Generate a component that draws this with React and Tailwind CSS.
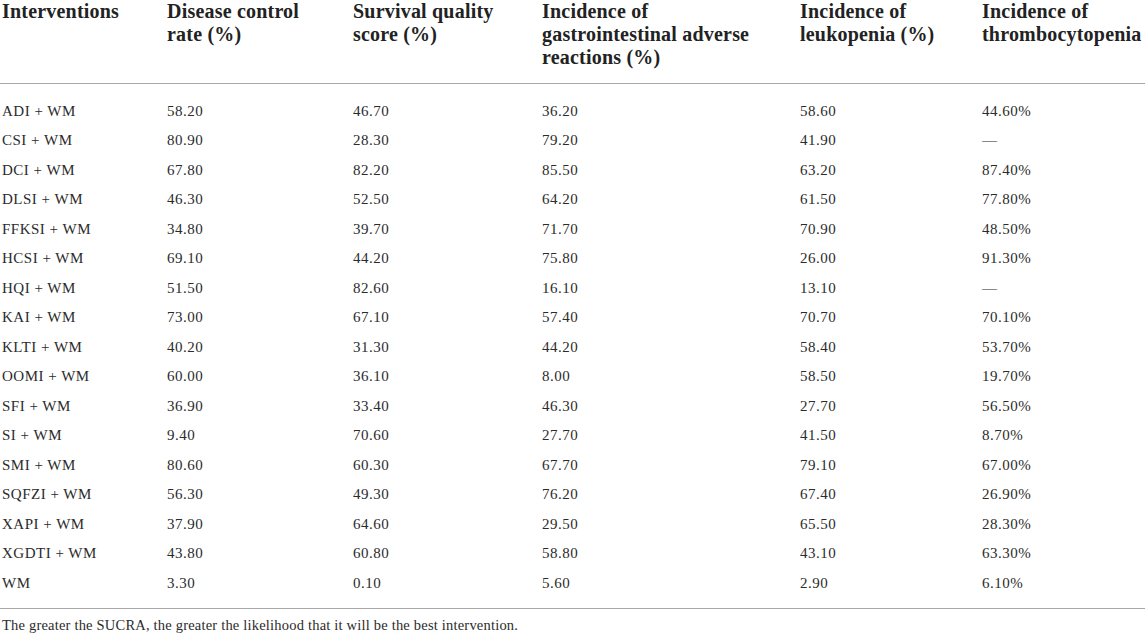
export default function App() {
  const headers = [
    ["Interventions"],
    ["Disease control", "rate (%)"],
    ["Survival quality", "score (%)"],
    ["Incidence of", "gastrointestinal adverse", "reactions (%)"],
    ["Incidence of", "leukopenia (%)"],
    ["Incidence of", "thrombocytopenia"],
  ];
  const rows = [
    ["ADI + WM", "58.20", "46.70", "36.20", "58.60", "44.60%"],
    ["CSI + WM", "80.90", "28.30", "79.20", "41.90", "—"],
    ["DCI + WM", "67.80", "82.20", "85.50", "63.20", "87.40%"],
    ["DLSI + WM", "46.30", "52.50", "64.20", "61.50", "77.80%"],
    ["FFKSI + WM", "34.80", "39.70", "71.70", "70.90", "48.50%"],
    ["HCSI + WM", "69.10", "44.20", "75.80", "26.00", "91.30%"],
    ["HQI + WM", "51.50", "82.60", "16.10", "13.10", "—"],
    ["KAI + WM", "73.00", "67.10", "57.40", "70.70", "70.10%"],
    ["KLTI + WM", "40.20", "31.30", "44.20", "58.40", "53.70%"],
    ["OOMI + WM", "60.00", "36.10", "8.00", "58.50", "19.70%"],
    ["SFI + WM", "36.90", "33.40", "46.30", "27.70", "56.50%"],
    ["SI + WM", "9.40", "70.60", "27.70", "41.50", "8.70%"],
    ["SMI + WM", "80.60", "60.30", "67.70", "79.10", "67.00%"],
    ["SQFZI + WM", "56.30", "49.30", "76.20", "67.40", "26.90%"],
    ["XAPI + WM", "37.90", "64.60", "29.50", "65.50", "28.30%"],
    ["XGDTI + WM", "43.80", "60.80", "58.80", "43.10", "63.30%"],
    ["WM", "3.30", "0.10", "5.60", "2.90", "6.10%"],
  ];
  const cols = "grid grid-cols-[165px_186px_189px_258px_182px_200px]";
  return (
    <div className="w-[1145px] h-[637px] overflow-hidden bg-white text-[#2b2b2b] font-['Liberation_Serif','Times_New_Roman',serif]">
      <div className={`${cols} pl-[2px] h-[84px] border-b-[1.5px] border-[#a8a8a8]`}>
        {headers.map((h, i) => (
          <div
            key={i}
            className="text-[20px] leading-[23px] font-bold text-[#222] whitespace-nowrap tracking-[0.2px]"
          >
            {h.map((line, li) => (
              <div key={li}>{line}</div>
            ))}
          </div>
        ))}
      </div>
      <div className="pt-[12px] pb-[10px] border-b-[1.5px] border-[#a8a8a8]">
        {rows.map((r, ri) => (
          <div key={ri} className={`${cols} pl-[2px] h-[29.5px] items-center`}>
            {r.map((c, ci) => (
              <div key={ci} className="text-[15px] leading-[20px] tracking-[0.5px]">
                {c}
              </div>
            ))}
          </div>
        ))}
      </div>
      <div className="pl-[2px] pt-[6px] text-[14.5px] leading-[20px] tracking-[0.2px]">
        The greater the SUCRA, the greater the likelihood that it will be the best intervention.
      </div>
    </div>
  );
}
